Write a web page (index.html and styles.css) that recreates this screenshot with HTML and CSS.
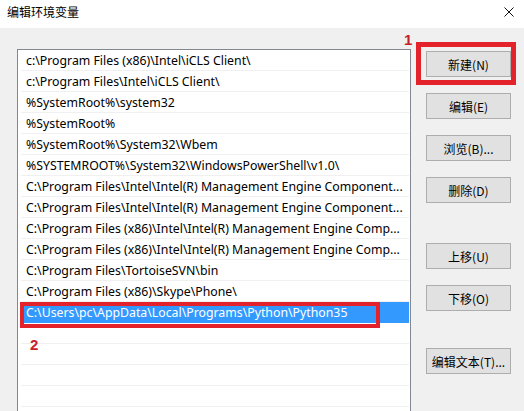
FILE: index.html
```html
<!DOCTYPE html>
<html lang="zh-CN">
<head>
<meta charset="utf-8">
<title>编辑环境变量</title>
<link rel="stylesheet" href="styles.css">
</head>
<body>
<div class="window">
  <div class="titlebar">
    <span class="title">编辑环境变量</span>
    <svg class="close" width="10" height="10" viewBox="0 0 10 10"><path d="M0.5 0.5 L9.5 9.5 M9.5 0.5 L0.5 9.5" stroke="#111" stroke-width="1"/></svg>
  </div>
  <div class="content">
    <div class="list">
      <div class="row">c:\Program Files (x86)\Intel\iCLS Client\</div>
      <div class="row">c:\Program Files\Intel\iCLS Client\</div>
      <div class="row">%SystemRoot%\system32</div>
      <div class="row">%SystemRoot%</div>
      <div class="row">%SystemRoot%\System32\Wbem</div>
      <div class="row">%SYSTEMROOT%\System32\WindowsPowerShell\v1.0\</div>
      <div class="row">C:\Program Files\Intel\Intel(R) Management Engine Component...</div>
      <div class="row">C:\Program Files\Intel\Intel(R) Management Engine Component...</div>
      <div class="row">C:\Program Files (x86)\Intel\Intel(R) Management Engine Comp...</div>
      <div class="row">C:\Program Files (x86)\Intel\Intel(R) Management Engine Comp...</div>
      <div class="row">C:\Program Files\TortoiseSVN\bin</div>
      <div class="row">C:\Program Files (x86)\Skype\Phone\</div>
      <div class="row selected">C:\Users\pc\AppData\Local\Programs\Python\Python35</div>
      <div class="row"></div>
      <div class="row"></div>
      <div class="row"></div>
      <div class="row"></div>
    </div>
    <div class="buttons">
      <button class="btn">新建(N)</button>
      <button class="btn">编辑(E)</button>
      <button class="btn">浏览(B)...</button>
      <button class="btn">删除(D)</button>
      <button class="btn gap-large">上移(U)</button>
      <button class="btn">下移(O)</button>
      <button class="btn gap-text">编辑文本(T)...</button>
    </div>
  </div>
</div>
<div class="mark mark-1"></div>
<div class="num num-1">1</div>
<div class="mark mark-2"></div>
<div class="num num-2">2</div>
</body>
</html>
```
FILE: styles.css
```css
html, body {
  margin: 0;
  padding: 0;
}
body {
  width: 524px;
  height: 411px;
  overflow: hidden;
  position: relative;
  font-family: "Noto Sans", "Noto Sans CJK SC", sans-serif;
  font-size: 12px;
  color: #000;
  background: #f0f0f0;
}
.window {
  display: flex;
  flex-direction: column;
  height: 411px;
}
.titlebar {
  height: 28px;
  background: #fff;
  display: flex;
  align-items: center;
  justify-content: space-between;
  padding: 0 10px 0 7px;
  flex: none;
}
.title {
  font-family: "Noto Sans CJK SC", sans-serif;
  font-size: 12px;
  margin-top: -6px;
}
.close {
  margin-top: -4px;
}
.content {
  flex: 1;
  display: flex;
  padding: 21px 0 0 17px;
  overflow: hidden;
}
.list {
  width: 388px;
  border: 1px solid #828790;
  border-bottom: none;
  background: #fff;
  padding: 0 1px 0 3px;
  flex: none;
}
.row {
  height: 20px;
  line-height: 21px;
  font-size: 12.3px;
  border-bottom: 1px solid #f0f0f0;
  padding-left: 5px;
  white-space: nowrap;
  overflow: hidden;
}
.row.selected {
  background: #3399ff;
  color: #fff;
  border-bottom-color: #3399ff;
}
.buttons {
  display: flex;
  flex-direction: column;
  margin-left: 15px;
  padding-top: 2px;
  gap: 16px;
}
.btn {
  width: 85px;
  height: 26px;
  background: #e1e1e1;
  border: 1px solid #adadad;
  font-family: "Noto Sans CJK SC", sans-serif;
  font-size: 12px;
  color: #000;
  padding: 0;
  margin: 0;
}
.gap-large {
  margin-top: 24px;
}
.gap-text {
  margin-top: 21px;
}
.mark {
  position: absolute;
  border: 5px solid #e3222c;
  box-sizing: border-box;
}
.mark-1 {
  left: 416px;
  top: 42px;
  width: 100px;
  height: 43px;
}
.mark-2 {
  left: 20px;
  top: 302px;
  width: 360px;
  height: 26px;
  border-width: 4px;
}
.num {
  position: absolute;
  font-family: "Liberation Sans", sans-serif;
  font-weight: bold;
  color: #c8202a;
  font-size: 15px;
  line-height: 1;
}
.num-1 {
  left: 404px;
  top: 32px;
}
.num-2 {
  left: 30px;
  top: 337px;
}
```
